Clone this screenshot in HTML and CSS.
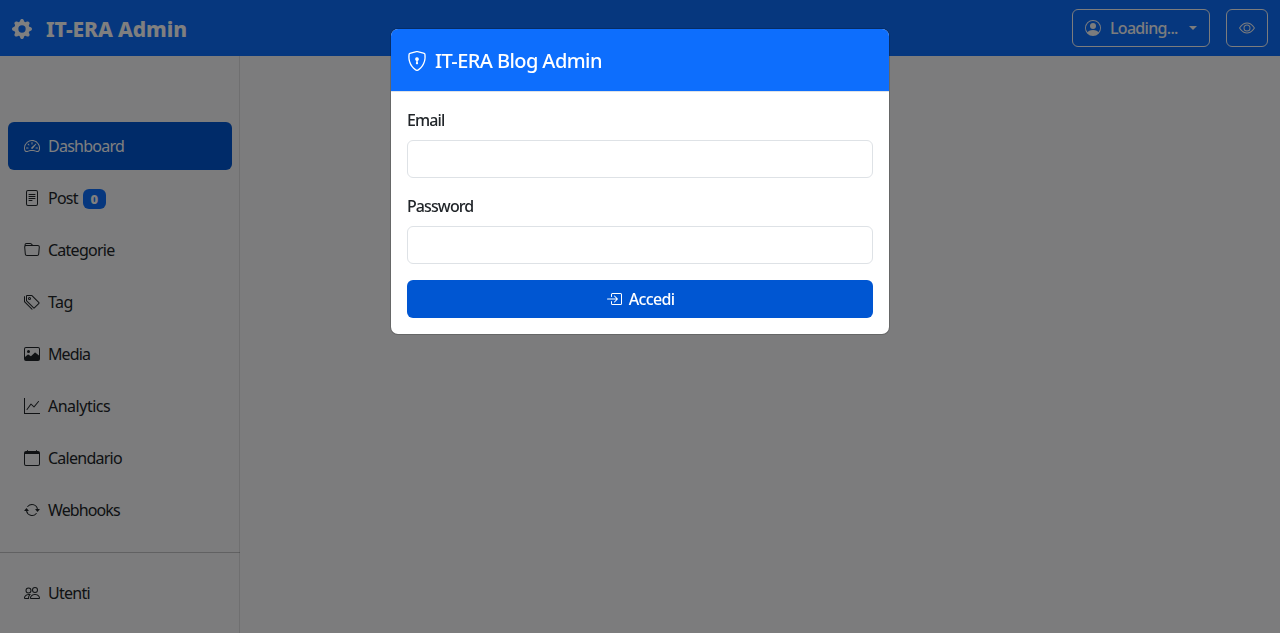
FILE: index.html
```html
<!DOCTYPE html>
<html lang="it">
<head>
<meta charset="utf-8">
<title>IT-ERA Admin</title>
<link rel="stylesheet" href="styles.css">
</head>
<body>
<header class="navbar">
  <div class="brand">
    <svg class="icon" viewBox="0 0 16 16"><path d="M9.405 1.05c-.413-1.4-2.397-1.4-2.81 0l-.1.34a1.464 1.464 0 0 1-2.105.872l-.31-.17c-1.283-.698-2.686.705-1.987 1.987l.169.311c.446.82.023 1.841-.872 2.105l-.34.1c-1.4.413-1.4 2.397 0 2.81l.34.1a1.464 1.464 0 0 1 .872 2.105l-.17.31c-.698 1.283.705 2.686 1.987 1.987l.311-.169a1.464 1.464 0 0 1 2.105.872l.1.34c.413 1.4 2.397 1.4 2.81 0l.1-.34a1.464 1.464 0 0 1 2.105-.872l.31.17c1.283.698 2.686-.705 1.987-1.987l-.169-.311a1.464 1.464 0 0 1 .872-2.105l.34-.1c1.4-.413 1.4-2.397 0-2.81l-.34-.1a1.464 1.464 0 0 1-.872-2.105l.17-.31c.698-1.283-.705-2.686-1.987-1.987l-.311.169a1.464 1.464 0 0 1-2.105-.872zM8 10.93a2.929 2.929 0 1 1 0-5.86 2.929 2.929 0 0 1 0 5.858z"/></svg>
    <span class="brand-name">IT-ERA Admin</span>
  </div>
  <div class="actions">
    <button class="btn-outline user">
      <svg class="icon" viewBox="0 0 16 16"><path d="M11 6a3 3 0 1 1-6 0 3 3 0 0 1 6 0"/><path fill-rule="evenodd" d="M0 8a8 8 0 1 1 16 0A8 8 0 0 1 0 8m8-7a7 7 0 0 0-5.468 11.37C3.242 11.226 4.805 10 8 10s4.757 1.225 5.468 2.37A7 7 0 0 0 8 1"/></svg>
      <span class="loading">Loading...</span><span class="caret"></span>
    </button>
    <button class="btn-outline">
      <svg class="icon" viewBox="0 0 16 16"><path d="M16 8s-3-5.5-8-5.5S0 8 0 8s3 5.5 8 5.5S16 8 16 8M1.173 8a13 13 0 0 1 1.66-2.043C4.12 4.668 5.88 3.5 8 3.5s3.879 1.168 5.168 2.457A13 13 0 0 1 14.828 8q-.086.13-.195.288c-.335.48-.83 1.12-1.465 1.755C11.879 11.332 10.119 12.5 8 12.5s-3.879-1.168-5.168-2.457A13 13 0 0 1 1.172 8z"/><path d="M8 5.5a2.5 2.5 0 1 0 0 5 2.5 2.5 0 0 0 0-5M4.5 8a3.5 3.5 0 1 1 7 0 3.5 3.5 0 0 1-7 0"/></svg>
    </button>
  </div>
</header>
<nav class="sidebar">
  <a class="link active"><svg class="icon" viewBox="0 0 16 16"><path d="M8 4a.5.5 0 0 1 .5.5V6a.5.5 0 0 1-1 0V4.500A.5.5 0 0 1 8 4M3.732 5.732a.5.5 0 0 1 .707 0l.915.914a.5.5 0 1 1-.708.708l-.914-.915a.5.5 0 0 1 0-.707M2 10a.5.5 0 0 1 .5-.5h1.586a.5.5 0 0 1 0 1H2.500A.5.5 0 0 1 2 10m9.500 0a.5.5 0 0 1 .5-.5h1.500a.5.5 0 0 1 0 1H12a.5.5 0 0 1-.5-.5m.754-4.246a.39.39 0 0 0-.527-.02L7.547 9.310a.91.91 0 1 0 1.302 1.258l3.434-4.297a.39.39 0 0 0-.029-.518z"/><path fill-rule="evenodd" d="M0 10a8 8 0 1 1 15.547 2.661c-.442 1.253-1.845 1.602-2.932 1.250C11.309 13.488 9.475 13 8 13c-1.474 0-3.310.488-4.615.911-1.087.352-2.490.003-2.932-1.250A8 8 0 0 1 0 10m8-7a7 7 0 0 0-6.603 9.329c.203.575.923.876 1.680.630C4.397 12.533 6.358 12 8 12s3.604.532 4.923.960c.757.245 1.477-.056 1.680-.631A7 7 0 0 0 8 3"/></svg><span class="label">Dashboard</span></a>
  <a class="link"><svg class="icon" viewBox="0 0 16 16"><path d="M5 4a.5.5 0 0 0 0 1h6a.5.5 0 0 0 0-1zm-.5 2.500A.5.5 0 0 1 5 6h6a.5.5 0 0 1 0 1H5a.5.5 0 0 1-.5-.5M5 8a.5.5 0 0 0 0 1h6a.5.5 0 0 0 0-1zm0 2a.5.5 0 0 0 0 1h3a.5.5 0 0 0 0-1z"/><path d="M2 2a2 2 0 0 1 2-2h8a2 2 0 0 1 2 2v12a2 2 0 0 1-2 2H4a2 2 0 0 1-2-2zm10-1H4a1 1 0 0 0-1 1v12a1 1 0 0 0 1 1h8a1 1 0 0 0 1-1V2a1 1 0 0 0-1-1"/></svg><span class="label">Post</span><span class="badge">0</span></a>
  <a class="link"><svg class="icon" viewBox="0 0 16 16"><path d="M.54 3.870.5 3a2 2 0 0 1 2-2h3.672a2 2 0 0 1 1.414.586l.828.828A2 2 0 0 0 9.828 3h3.982a2 2 0 0 1 1.992 2.181l-.637 7A2 2 0 0 1 13.174 14H2.826a2 2 0 0 1-1.991-1.819l-.637-7a2 2 0 0 1 .342-1.310zM2.190 4a1 1 0 0 0-.996 1.090l.637 7a1 1 0 0 0 .995.910h10.348a1 1 0 0 0 .995-.910l.637-7A1 1 0 0 0 13.810 4zm4.690-1.707A1 1 0 0 0 6.172 2H2.500a1 1 0 0 0-1 .981l.006.139q.323-.119.684-.120h5.396z"/></svg><span class="label">Categorie</span></a>
  <a class="link"><svg class="icon" viewBox="0 0 16 16"><path d="M3 2v4.586l7 7L14.586 9l-7-7zM2 2a1 1 0 0 1 1-1h4.586a1 1 0 0 1 .707.293l7 7a1 1 0 0 1 0 1.414l-4.586 4.586a1 1 0 0 1-1.414 0l-7-7A1 1 0 0 1 2 6.586z"/><path d="M5.500 5a.5.5 0 1 1 0-1 .5.5 0 0 1 0 1m0 1a1.500 1.500 0 1 0 0-3 1.500 1.500 0 0 0 0 3M1 7.086a1 1 0 0 0 .293.707L8.750 15.250l-.043.043a1 1 0 0 1-1.414 0l-7-7A1 1 0 0 1 0 7.586V3a1 1 0 0 1 1-1z"/></svg><span class="label wide">Tag</span></a>
  <a class="link"><svg class="icon" viewBox="0 0 16 16"><path fill-rule="evenodd" d="M2 1h12a2 2 0 0 1 2 2v10a2 2 0 0 1-2 2H2a2 2 0 0 1-2-2V3a2 2 0 0 1 2-2m0 1a1 1 0 0 0-1 1v8l2.646-2.354a.5.5 0 0 1 .63-.062l2.660 1.773 3.710-3.710a.5.5 0 0 1 .577-.094L15 9.500V3a1 1 0 0 0-1-1zM4.500 4a1.500 1.500 0 1 1 0 3 1.500 1.500 0 0 1 0-3"/></svg><span class="label narrow">Media</span></a>
  <a class="link"><svg class="icon" viewBox="0 0 16 16"><path fill-rule="evenodd" d="M0 0h1v15h15v1H0zm14.817 3.113a.5.5 0 0 1 .070.704l-4.500 5.500a.5.5 0 0 1-.740.037L7.060 6.767l-3.656 5.027a.5.5 0 0 1-.808-.588l4-5.500a.5.5 0 0 1 .758-.060l2.609 2.610 4.150-5.073a.5.5 0 0 1 .704-.070"/></svg><span class="label wide">Analytics</span></a>
  <a class="link"><svg class="icon" viewBox="0 0 16 16"><path d="M3.500 0a.5.5 0 0 1 .5.5V1h8V.5a.5.5 0 0 1 1 0V1h1a2 2 0 0 1 2 2v11a2 2 0 0 1-2 2H2a2 2 0 0 1-2-2V3a2 2 0 0 1 2-2h1V.5a.5.5 0 0 1 .5-.5M1 4v10a1 1 0 0 0 1 1h12a1 1 0 0 0 1-1V4z"/></svg><span class="label">Calendario</span></a>
  <a class="link"><svg class="icon" viewBox="0 0 16 16"><path d="M11.534 7h3.932a.25.25 0 0 1 .192.410l-1.966 2.360a.25.25 0 0 1-.384 0l-1.966-2.360a.25.25 0 0 1 .192-.410m-11 2h3.932a.25.25 0 0 0 .192-.410L2.692 6.230a.25.25 0 0 0-.384 0L.342 8.590A.25.25 0 0 0 .534 9"/><path fill-rule="evenodd" d="M8 3c-1.552 0-2.940.707-3.857 1.818a.5.5 0 1 1-.771-.636A6.002 6.002 0 0 1 13.917 7H12.900A5 5 0 0 0 8 3M3.100 9a5.002 5.002 0 0 0 8.757 2.182.5.5 0 1 1 .771.636A6.002 6.002 0 0 1 2.083 9z"/></svg><span class="label narrow">Webhooks</span></a>
  <hr class="divider">
  <a class="link"><svg class="icon" viewBox="0 0 16 16"><path d="M15 14s1 0 1-1-1-4-5-4-5 3-5 4 1 1 1 1zm-7.978-1L7 12.996c.001-.264.167-1.030.760-1.720C8.312 10.629 9.282 10 11 10c1.717 0 2.687.630 3.240 1.276.593.690.758 1.457.760 1.720l-.008.002-.014.002zM11 7a2 2 0 1 0 0-4 2 2 0 0 0 0 4m3-2a3 3 0 1 1-6 0 3 3 0 0 1 6 0M6.936 9.280a6 6 0 0 0-1.230-.247A7 7 0 0 0 5 9c-4 0-5 3-5 4q0 1 1 1h4.216A2.240 2.240 0 0 1 5 13c0-1.010.377-2.042 1.090-2.904.243-.294.526-.569.846-.816M4.920 10A5.500 5.500 0 0 0 4 13H1c0-.260.164-1.030.760-1.724.545-.636 1.492-1.256 3.160-1.275zM1.500 5.500a3 3 0 1 1 6 0 3 3 0 0 1-6 0m3-2a2 2 0 1 0 0 4 2 2 0 0 0 0-4"/></svg><span class="label">Utenti</span></a>
</nav>
<div class="backdrop">
  <section class="modal">
    <div class="modal-header">
      <svg class="icon" viewBox="0 0 16 16"><path d="M5.338 1.590a61 61 0 0 0-2.837.856.480.480 0 0 0-.328.390c-.554 4.157.726 7.190 2.253 9.188a10.700 10.700 0 0 0 2.287 2.233c.346.244.652.420.893.533q.180.085.293.118a1 1 0 0 0 .101.025 1 1 0 0 0 .100-.025q.114-.034.294-.118c.240-.113.547-.290.893-.533a10.700 10.700 0 0 0 2.287-2.233c1.527-1.997 2.807-5.031 2.253-9.188a.480.480 0 0 0-.328-.390c-.651-.213-1.750-.560-2.837-.855C9.552 1.290 8.531 1.067 8 1.067c-.530 0-1.552.223-2.662.524zM5.072.560C6.157.265 7.310 0 8 0s1.843.265 2.928.560c1.110.300 2.229.655 2.887.870a1.540 1.540 0 0 1 1.044 1.262c.596 4.477-.787 7.795-2.465 9.990a11.800 11.800 0 0 1-2.517 2.453 7 7 0 0 1-1.048.625c-.280.132-.581.240-.829.240s-.548-.108-.829-.240a7 7 0 0 1-1.048-.625 11.800 11.800 0 0 1-2.517-2.453C1.928 10.487.545 7.169 1.141 2.692A1.540 1.540 0 0 1 2.185 1.430 63 63 0 0 1 5.072.560"/><path d="M9.500 6.500a1.500 1.500 0 0 1-1 1.415l.385 1.990a.5.5 0 0 1-.491.595h-.788a.5.5 0 0 1-.490-.595l.384-1.990a1.500 1.500 0 1 1 2-1.415"/></svg>
      <h1 class="modal-title">IT-ERA Blog Admin</h1>
    </div>
    <form class="modal-body">
      <label class="field-label" for="email">Email</label>
      <input class="field" id="email" type="email">
      <label class="field-label password" for="password">Password</label>
      <input class="field" id="password" type="password">
      <button class="submit" type="button"><svg class="icon" viewBox="0 0 16 16"><path fill-rule="evenodd" d="M6 3.500a.5.5 0 0 1 .5-.5h8a.5.5 0 0 1 .5.5v9a.5.5 0 0 1-.5.5h-8a.5.5 0 0 1-.5-.5v-2a.5.5 0 0 0-1 0v2A1.500 1.500 0 0 0 6.500 14h8a1.500 1.500 0 0 0 1.500-1.500v-9A1.500 1.500 0 0 0 14.500 2h-8A1.500 1.500 0 0 0 5 3.500v2a.5.5 0 0 0 1 0z"/><path fill-rule="evenodd" d="M11.854 8.354a.5.5 0 0 0 0-.708l-3-3a.5.5 0 1 0-.708.708L10.293 7.500H1.500a.5.5 0 0 0 0 1h8.793l-2.147 2.146a.5.5 0 0 0 .708.708z"/></svg><span>Accedi</span></button>
    </form>
  </section>
</div>
</body>
</html>
```
FILE: styles.css
```css
* { box-sizing: border-box; }
body {
  margin: 0;
  height: 633px;
  overflow: hidden;
  background: #f8f9fa;
  color: #212529;
  font: 16px/24px Tahoma, "Noto Sans", sans-serif;
  letter-spacing: -0.5px;
}
button { font: inherit; letter-spacing: inherit; }
.icon { width: 16px; height: 16px; fill: currentColor; flex: none; }
.navbar {
  height: 56px;
  padding: 0 12px;
  display: flex;
  align-items: center;
  justify-content: space-between;
  background: #0d6efd;
  color: #fff;
}
.brand { display: flex; align-items: center; gap: 14px; font-size: 21px; font-weight: 800; letter-spacing: -0.1px; }
.brand .icon { width: 20px; height: 20px; margin-top: 2px; }
.brand-name { padding-top: 2px; }
.actions { display: flex; gap: 16px; }
.btn-outline {
  height: 38px;
  padding: 0 12px;
  display: flex;
  align-items: center;
  border: 1px solid #f8f9fa;
  border-radius: 6px;
  background: transparent;
  color: #f8f9fa;
}
.user { width: 138px; }
.loading { margin-left: 9px; font-weight: 500; letter-spacing: -0.7px; }
.caret {
  margin-left: auto;
  border-top: 4.8px solid;
  border-left: 4.8px solid transparent;
  border-right: 4.8px solid transparent;
}
.sidebar {
  width: 240px;
  height: 577px;
  padding-top: 64px;
  background: #f8f9fa;
  box-shadow: inset -1px 0 0 rgba(0, 0, 0, 0.1);
}
.link {
  height: 48px;
  margin: 2px 8px 4px;
  padding: 0 16px;
  display: flex;
  align-items: center;
  border-radius: 6px;
}
.link + .link { margin-top: 0; }
.label { margin-left: 8px; letter-spacing: -0.75px; }
.label.wide { letter-spacing: -0.5px; }
.label.narrow { letter-spacing: -0.9px; }
.active { background: #0056d2; color: #fff; }
.badge {
  margin: 2px 0 0 5px;
  width: 23px;
  height: 20px;
  border-radius: 6px;
  background: #0d6efd;
  color: #fff;
  font-size: 13px;
  font-weight: 900;
  line-height: 20px;
  text-align: center;
  letter-spacing: 0;
}
.divider { margin: 18px 0 16px; border: 0; border-top: 1px solid #212529; opacity: 0.25; }
.backdrop {
  position: fixed;
  inset: 0;
  padding-top: 28px;
  display: flex;
  justify-content: center;
  align-items: flex-start;
  background: rgba(0, 0, 0, 0.5);
}
.modal {
  width: 500px;
  border: 1px solid rgba(0, 0, 0, 0.175);
  border-radius: 8px;
  background: #fff;
  background-clip: padding-box;
}
.modal-header {
  height: 63px;
  padding: 0 16px;
  display: flex;
  align-items: center;
  gap: 8px;
  border-bottom: 1px solid #dee2e6;
  border-radius: 7px 7px 0 0;
  background: #0d6efd;
  color: #fff;
}
.modal-header .icon { width: 20px; height: 20px; margin-top: 2px; }
.modal-title { margin: 0; padding-top: 2px; font-size: 20px; font-weight: 500; line-height: 30px; letter-spacing: -0.58px; }
.modal-body { padding: 16px; display: flex; flex-direction: column; }
.field-label { margin-bottom: 8px; font-weight: 500; letter-spacing: -0.9px; }
.password { margin-top: 16px; }
.field { width: 100%; height: 38px; border: 1px solid #dee2e6; border-radius: 6px; background: #fff; }
.submit {
  height: 38px;
  margin-top: 16px;
  display: flex;
  align-items: center;
  justify-content: center;
  gap: 7px;
  border: 0;
  border-radius: 6px;
  background: #0056d2;
  color: #fff;
  font-weight: 500;
  letter-spacing: -0.65px;
}
```
